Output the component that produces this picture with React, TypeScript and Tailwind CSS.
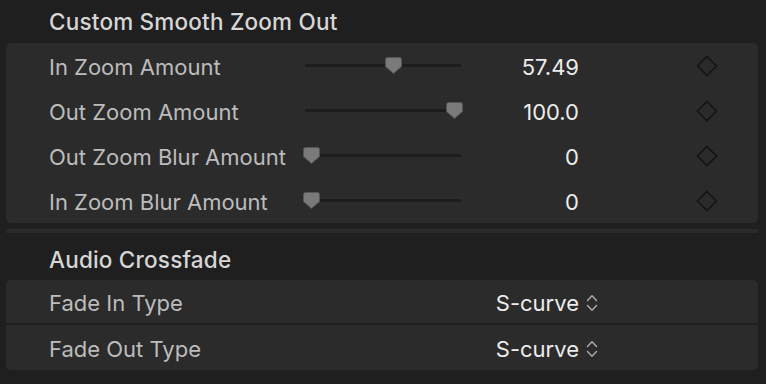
import React from "react";

const font = { fontFamily: "Inter, 'Noto Sans', sans-serif" };

function Thumb() {
  return (
    <svg width="17" height="17" viewBox="0 0 17 17">
      <path
        d="M2.5 0.5 H14.5 A2 2 0 0 1 16.5 2.5 V9.5 L8.5 16.5 L0.5 9.5 V2.5 A2 2 0 0 1 2.5 0.5 Z"
        fill="#7a7a7a"
        stroke="#555555"
        strokeWidth="1"
      />
    </svg>
  );
}

function Diamond() {
  return (
    <svg width="22" height="22" viewBox="0 0 22 22">
      <polygon points="11,1.5 20.5,11 11,20.5 1.5,11" fill="none" stroke="#141414" strokeWidth="1.6" />
    </svg>
  );
}

function UpDown() {
  return (
    <svg width="12" height="18" viewBox="0 0 12 18">
      <path d="M1.5 6.5 L6 1.8 L10.5 6.5" fill="none" stroke="#a8a8a8" strokeWidth="1.5" strokeLinecap="round" strokeLinejoin="round" />
      <path d="M1.5 11.5 L6 16.2 L10.5 11.5" fill="none" stroke="#a8a8a8" strokeWidth="1.5" strokeLinecap="round" strokeLinejoin="round" />
    </svg>
  );
}

function SliderRow({ label, value, pct }: { label: string; value: string; pct: number }) {
  const left = 6 + pct * 1.43 - 8.5;
  return (
    <div className="flex h-[45px] items-center pl-[43px]">
      <div className="w-[256px] pt-[3px] text-[22px] text-[#bcbcbc]">{label}</div>
      <div className="relative flex h-[17px] w-[156px] items-center">
        <div className="h-[3px] w-full rounded-full bg-[#1d1d1d]" />
        <div className="absolute top-0" style={{ left }}>
          <Thumb />
        </div>
      </div>
      <div className="w-[118px] pt-[3px] text-right text-[22px] text-[#ececec]">{value}</div>
      <div className="ml-[117px] flex items-center">
        <Diamond />
      </div>
    </div>
  );
}

function PopupRow({ label, value, border }: { label: string; value: string; border?: boolean }) {
  return (
    <div className={"flex h-[45px] items-center pl-[43px]" + (border ? " border-b-2 border-[#1f1f1f]" : "")}>
      <div className="w-[412px] pt-[3px] text-[22px] text-[#bcbcbc]">{label}</div>
      <div className="w-[118px] pt-[3px] text-right text-[22px] text-[#ececec]">{value}</div>
      <div className="ml-[7px] flex items-center pt-[2px]">
        <UpDown />
      </div>
    </div>
  );
}

export default function App() {
  return (
    <div className="h-[384px] w-[766px] overflow-hidden bg-[#1f1f1f]" style={font}>
      <div className="flex h-[43px] items-center pl-[49px] pt-[1px] text-[22.5px] font-medium tracking-[0.2px] text-[#d6d6d6]">
        Custom Smooth Zoom Out
      </div>
      <div className="ml-[6px] w-[752px] rounded-[5px] bg-[#2b2b2b]">
        <SliderRow label="In Zoom Amount" value="57.49" pct={57.49} />
        <SliderRow label="Out Zoom Amount" value="100.0" pct={100} />
        <SliderRow label="Out Zoom Blur Amount" value="0" pct={0} />
        <SliderRow label="In Zoom Blur Amount" value="0" pct={0} />
      </div>
      <div className="ml-[6px] mt-[6px] h-[4px] w-[752px] bg-[#2a2a2a]" />
      <div className="flex h-[47px] items-center pl-[49px] pt-[6px] text-[22.5px] font-medium tracking-[0.2px] text-[#d6d6d6]">
        Audio Crossfade
      </div>
      <div className="ml-[6px] w-[752px] rounded-[5px] bg-[#2b2b2b]">
        <PopupRow label="Fade In Type" value="S-curve" border />
        <PopupRow label="Fade Out Type" value="S-curve" />
      </div>
    </div>
  );
}
